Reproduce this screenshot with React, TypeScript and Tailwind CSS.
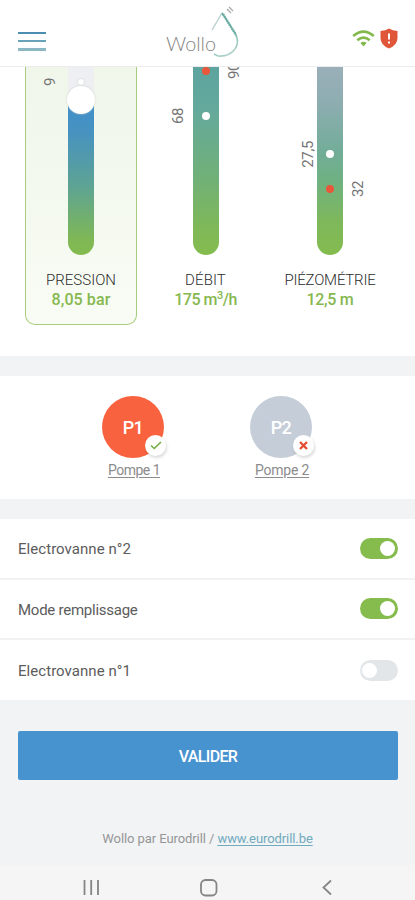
import { useState } from 'react'

interface Marker {
  top: string
  color: string
  label: string
  labelClass: string
}

interface Gauge {
  name: string
  value: string
  exponent?: string
  suffix?: string
  selected?: boolean
  bar: string
  knob?: boolean
  nameClass: string
  valueClass: string
  markers: Marker[]
}

const gauges: Gauge[] = [
  {
    name: 'PRESSION',
    value: '8,05 bar',
    selected: true,
    bar: 'bg-[linear-gradient(180deg,#eeeff3_0px,#eeeff3_36px,#408fcb_37px,#4792c0_65px,#5da395_118px,#80b854_174px,#83bb50_188px)]',
    knob: true,
    nameClass: 'tracking-[0px]',
    valueClass: 'tracking-[0.1px]',
    markers: [{ top: 'top-[11px]', color: 'border border-[#e0e1e5] bg-white', label: '9', labelClass: 'right-[26px]' }]
  },
  {
    name: 'DÉBIT',
    value: '175 m',
    exponent: '3',
    suffix: '/h',
    bar: 'bg-[linear-gradient(180deg,#5da49f_0px,#65a99b_45px,#70b078_110px,#80b956_165px,#84bc4f_188px)]',
    nameClass: 'tracking-[0.1px]',
    valueClass: 'tracking-[-0.5px]',
    markers: [
      { top: 'top-0', color: 'bg-[#e9573b]', label: '90', labelClass: 'left-[25px]' },
      { top: 'top-[45px]', color: 'bg-white', label: '68', labelClass: 'right-[24px]' }
    ]
  },
  {
    name: 'PIÉZOMÉTRIE',
    value: '12,5 m',
    bar: 'bg-[linear-gradient(180deg,#9aafb9_0px,#8cadb0_38px,#72ad98_85px,#6eb183_112px,#7eb85b_155px,#84bc4f_188px)]',
    nameClass: 'tracking-[-0.2px] translate-x-0',
    valueClass: 'tracking-[-0.3px] translate-x-0',
    markers: [
      { top: 'top-[83px]', color: 'bg-white', label: '27,5', labelClass: 'right-[18px]' },
      { top: 'top-[118px]', color: 'bg-[#e9573b]', label: '32', labelClass: 'left-[25px]' }
    ]
  }
]

function Header() {
  return (
    <header className="flex h-[67px] shrink-0 items-start justify-between border-b border-[#ececee] bg-white pl-[18px] pr-[17px]">
      <button className="mt-8 flex w-7 flex-col gap-[6px]" aria-label="Menu">
        <span className="h-[2px] bg-[#4b8eb2]" />
        <span className="h-[2px] bg-[#68a2bb]" />
        <span className="h-[3px] bg-[#8bb8c3]" />
      </button>
      <svg className="ml-[10px] mt-1" width="80" height="58" viewBox="0 0 80 58" fill="none">
        <defs>
          <linearGradient id="drop" x1="50" y1="8" x2="70" y2="50" gradientUnits="userSpaceOnUse">
            <stop offset="0" stopColor="#67a4a6" />
            <stop offset="0.55" stopColor="#79b9ac" />
            <stop offset="1" stopColor="#b4d5ce" />
          </linearGradient>
        </defs>
        <text x="2" y="47" textLength="50" lengthAdjust="spacingAndGlyphs" fontFamily="Lato" fontWeight="300" fontSize="20" fill="#858585">Wollo</text>
        <path d="M58 9L48 26" stroke="#b9d1d0" strokeWidth="1.4" />
        <path d="M58 9L71 29Q76 38 71 45Q65 53 54 52L50 50" stroke="url(#drop)" strokeWidth="1.6" />
        <path d="M59 10L72 31" stroke="#6caea4" strokeWidth="2.4" strokeDasharray="1.6 0.8" />
        <path d="M63 5L67 9M65 3L69 7" stroke="#aaa" strokeWidth="1.3" />
      </svg>
      <div className="mt-7 flex items-start gap-[5px]">
        <svg className="mt-[2px]" width="23" height="18" viewBox="0 0 23 18" fill="none" stroke="#83b84d">
          <path d="M1.2 6Q11.5-2.7 21.8 6" strokeWidth="2.7" />
          <path d="M5.3 10.2Q11.5 5 17.7 10.2" strokeWidth="2.7" />
          <path d="M8.4 13Q11.5 10.7 14.6 13L11.5 16.5Z" fill="#83b84d" stroke="none" />
        </svg>
        <svg width="18" height="21" viewBox="0 0 18 21">
          <path d="M9 .5Q12.5 2.8 17.5 3V10Q17.5 17 9 20.5Q.5 17 .5 10V3Q5.5 2.8 9 .5Z" fill="#df5738" />
          <path d="M9 5.5V11.5M9 13.5V15.5" stroke="white" strokeWidth="2" />
        </svg>
      </div>
    </header>
  )
}

function GaugeColumn({ gauge }: { gauge: Gauge }) {
  return (
    <div
      className={`flex h-[258px] w-[112px] flex-col items-center rounded-b-[10px] border border-t-0 ${
        gauge.selected ? 'border-[#a9cd7f] bg-gradient-to-b from-[#f0f6ea] to-[#f8fcf5]' : 'border-transparent'
      }`}
    >
      <div className={`relative h-[188px] w-[26px] shrink-0 rounded-b-full ${gauge.bar}`}>
        {gauge.markers.map((marker) => (
          <div key={marker.label} className={`absolute left-[9px] flex size-2 items-center justify-center rounded-full ${marker.top} ${marker.color}`}>
            <span className={`absolute rotate-180 text-[15px] leading-none tracking-[-0.4px] text-[#747474] [writing-mode:vertical-rl] ${marker.labelClass}`}>
              {marker.label}
            </span>
          </div>
        ))}
        {gauge.knob && <div className="absolute left-[-1px] top-[19px] size-7 rounded-full bg-white shadow-[0_0_2px_#c8cdc8]" />}
      </div>
      <div className={`mt-[15px] whitespace-nowrap text-[15px] font-light leading-5 text-[#2c2c2c] ${gauge.nameClass}`}>{gauge.name}</div>
      <div className={`whitespace-nowrap text-base font-medium leading-5 text-[#86b84f] ${gauge.valueClass}`}>
        {gauge.value}
        {gauge.exponent && <sup className="-top-[6px] text-[11px] leading-none">{gauge.exponent}</sup>}
        {gauge.suffix}
      </div>
    </div>
  )
}

function Pump({ code, name, active }: { code: string; name: string; active: boolean }) {
  return (
    <div className="flex w-[62px] flex-col items-center">
      <div className={`relative flex size-[62px] items-center justify-center rounded-full ${active ? 'bg-[#f9623f]' : 'bg-[#c5cdd8]'}`}>
        <span className="mt-[2px] text-lg font-medium tracking-[-0.7px] text-white">{code}</span>
        <span className="absolute -right-[2px] bottom-[2px] flex size-[21px] items-center justify-center rounded-full bg-white shadow-[1px_2px_3px_#00000026]">
          {active ? (
            <svg width="12" height="9" viewBox="0 0 12 9" fill="none" stroke="#74ad42" strokeWidth="1.6"><path d="M1 4.5L4.2 7.5L11 1" /></svg>
          ) : (
            <svg width="9" height="9" viewBox="0 0 9 9" fill="none" stroke="#e44e35" strokeWidth="2.4"><path d="M1 1L8 8M8 1L1 8" /></svg>
          )}
        </span>
      </div>
      <a className={`mt-[2px] translate-x-px whitespace-nowrap text-sm leading-5 text-[#8c8c8c] underline underline-offset-2 ${active ? 'tracking-[-0.5px]' : 'tracking-[-0.2px]'}`}>{name}</a>
    </div>
  )
}

export default function App() {
  const [switches, setSwitches] = useState([
    { label: 'Electrovanne n°2', on: true },
    { label: 'Mode remplissage', on: true },
    { label: 'Electrovanne n°1', on: false }
  ])

  const toggle = (index: number) => {
    setSwitches((prev) => prev.map((item, i) => (i === index ? { ...item, on: !item.on } : item)))
  }

  return (
    <div className="flex h-[900px] w-[415px] flex-col overflow-hidden bg-[#f1f3f5] font-['Roboto',sans-serif]">
      <Header />
      <section className="flex h-[289px] shrink-0 gap-[12.5px] overflow-hidden bg-white pl-[25px]">
        {gauges.map((gauge) => (
          <GaugeColumn key={gauge.name} gauge={gauge} />
        ))}
      </section>

      <section className="mt-5 flex h-[123px] shrink-0 gap-[86px] bg-white pl-[102px] pt-5">
        <Pump code="P1" name="Pompe 1" active />
        <Pump code="P2" name="Pompe 2" active={false} />
      </section>

      <section className="mt-[20px] h-[181px] shrink-0 divide-y-2 divide-[#f1f2f4] bg-white">
        {switches.map((item, index) => (
          <div key={item.label} className="flex h-[60.5px] items-center justify-between pl-[18px] pr-[17px]">
            <span className={`mt-[2px] text-[15px] text-[#5c5c5c] ${item.label === 'Mode remplissage' ? 'tracking-[-0.25px]' : 'tracking-[0.05px]'}`}>{item.label}</span>
            <button
              onClick={() => toggle(index)}
              aria-label={item.label}
              className={`flex h-[21px] w-[38px] items-center rounded-full ${item.on ? 'justify-end bg-[#86bb4d] px-[3px]' : 'justify-start bg-[#e3e6e9] px-[2px]'}`}
            >
              <span className="size-[15px] rounded-full bg-white" />
            </button>
          </div>
        ))}
      </section>

      <button className="ml-[18px] mr-[17px] mt-[31px] h-[49px] shrink-0 rounded-[2px] bg-[#4793d0] pt-[2px] text-base font-medium tracking-[-0.65px] text-white">VALIDER</button>
      <footer className="mt-[49px] text-center text-[13px] leading-5 tracking-[-0.08px] text-[#969696]">
        Wollo par Eurodrill / <a className="text-[#6faabd] underline underline-offset-2">www.eurodrill.be</a>
      </footer>

      {/* Android navigation */}
      <nav className="mt-auto h-[35px] shrink-0 bg-[#f5f5f5]">
        <svg width="415" height="35" viewBox="0 0 415 35" fill="none" stroke="#858585" strokeWidth="1.8">
          <path d="M84.5 15V30M91.2 15V30M98 15V30" />
          <rect x="201" y="15" width="15.5" height="15.5" rx="4.5" />
          <path d="M331 15.5L323.5 22.5L331 29.5" />
        </svg>
      </nav>
    </div>
  )
}
